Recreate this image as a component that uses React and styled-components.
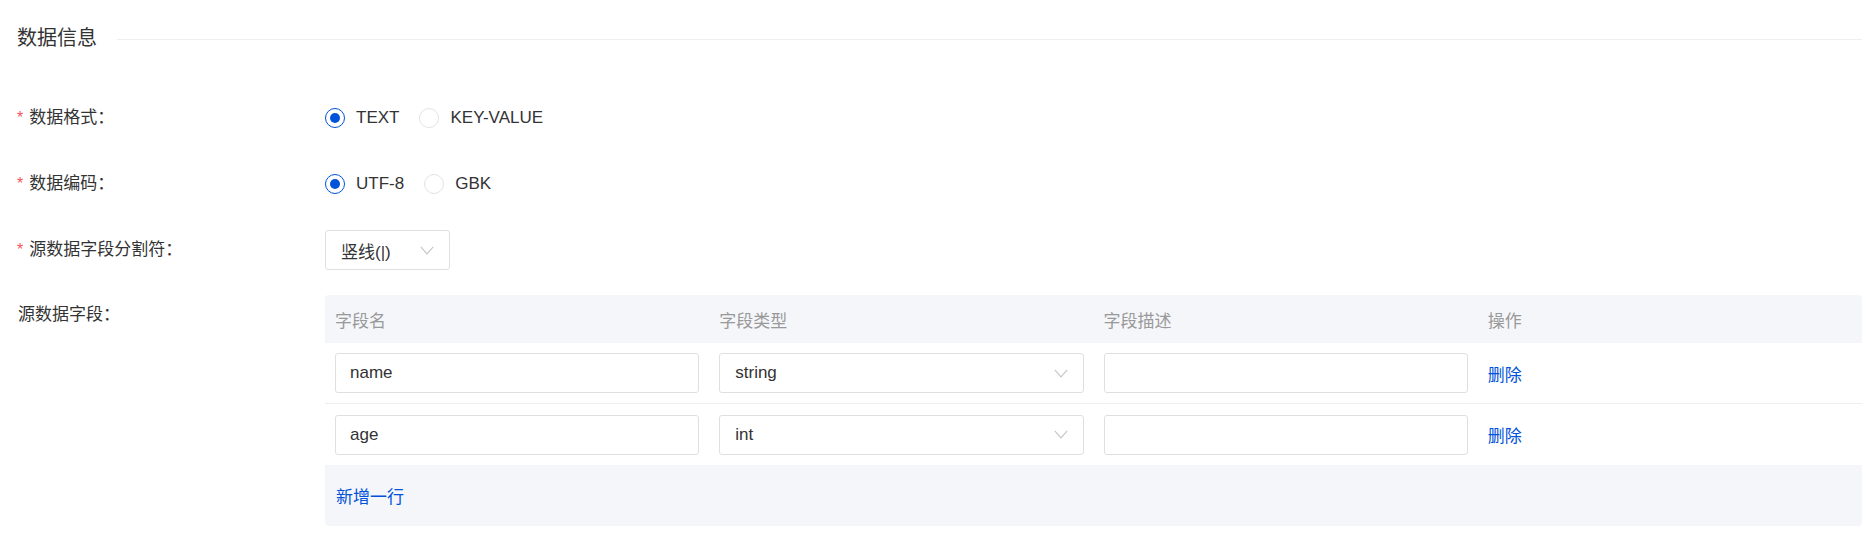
import React, { useState } from 'react';
import styled, { createGlobalStyle } from 'styled-components';

const GlobalStyle = createGlobalStyle`
  * {
    box-sizing: border-box;
  }

  body {
    margin: 0;
    background: #fff;
    font-family: 'Liberation Sans', 'Noto Sans CJK SC', sans-serif;
    color: #333;
  }
`;

const Page = styled.div`
  padding: 24px 8px 7px 17px;
`;

const SectionHeader = styled.div`
  display: flex;
  align-items: center;
  height: 28px;
  margin-bottom: 46px;

  h3 {
    margin: 0;
    font-size: 20px;
    font-weight: 400;
    line-height: 28px;
    color: #333;
    white-space: nowrap;
  }

  &::after {
    content: '';
    flex: 1;
    height: 1px;
    margin-left: 20px;
    margin-top: 2px;
    background: #eeeeee;
  }
`;

const FormItem = styled.div`
  display: flex;
  align-items: flex-start;
  margin-bottom: ${(p) => p.$gap ?? 26}px;
`;

const Label = styled.label`
  width: 308px;
  flex-shrink: 0;
  font-size: 17px;
  line-height: 40px;
  color: #333;
  padding-left: ${(p) => (p.$required ? 0 : 1)}px;

  &::before {
    content: ${(p) => (p.$required ? "'*'" : 'none')};
    color: #f5545c;
    margin-right: 6px;
    font-size: 16px;
  }
`;

const Control = styled.div`
  flex: 1;
  min-width: 0;
`;

const RadioGroup = styled.div`
  display: flex;
  align-items: center;
  height: 40px;
`;

const RadioOption = styled.label`
  display: inline-flex;
  align-items: center;
  margin-right: 10px;
  cursor: pointer;
  font-size: 17px;
  color: #333;

  span {
    padding: 0 10px 0 11px;
  }
`;

const RadioDot = styled.i`
  position: relative;
  width: 20px;
  height: 20px;
  border-radius: 50%;
  border: 1.5px solid ${(p) => (p.$checked ? '#0052d9' : '#e3e3e3')};
  background: #fff;

  &::after {
    content: '';
    position: absolute;
    left: 50%;
    top: 50%;
    width: 10px;
    height: 10px;
    margin: -5px 0 0 -5px;
    border-radius: 50%;
    background: #0052d9;
    opacity: ${(p) => (p.$checked ? 1 : 0)};
  }
`;

const SelectBox = styled.div`
  display: flex;
  align-items: center;
  justify-content: space-between;
  width: ${(p) => p.$width || '100%'};
  height: 40px;
  padding: 0 15px;
  border: 1px solid #dfdfdf;
  border-radius: 3px;
  background: #fff;
  font-size: 17px;
  color: #333;
`;

const Chevron = () => (
  <svg width="14" height="9" viewBox="0 0 14 9" fill="none">
    <path d="M0.8 0.8 L7 7.8 L13.2 0.8" stroke="#c6c6c6" strokeWidth="1.2" />
  </svg>
);

const Table = styled.div`
  width: 100%;
  border-radius: 4px;
  overflow: hidden;
`;

const TableRow = styled.div`
  display: grid;
  grid-template-columns: repeat(4, 1fr);
  align-items: center;
  height: ${(p) => (p.$head ? 48 : 61)}px;
  background: ${(p) => (p.$head ? '#f5f6fa' : '#fff')};
  border-bottom: ${(p) => (p.$divider ? '1px solid #eeeeee' : 'none')};
`;

const HeadCell = styled.div`
  padding: 0 10px;
  font-size: 17px;
  color: #999;
`;

const Cell = styled.div`
  padding: 0 10px;
`;

const TextInput = styled.input`
  width: 100%;
  height: 40px;
  padding: 0 14px;
  border: 1px solid #dfdfdf;
  border-radius: 3px;
  outline: none;
  font-family: inherit;
  font-size: 17px;
  color: #333;
  background: #fff;
`;

const LinkButton = styled.button`
  border: 0;
  padding: 0;
  background: none;
  cursor: pointer;
  font-family: inherit;
  font-size: 17px;
  color: #0052d9;
`;

const TableFooter = styled.div`
  display: flex;
  align-items: center;
  height: 61px;
  padding-left: 11px;
  background: #f5f6fa;
`;

const Radios = ({ options, value, onChange }) => (
  <RadioGroup>
    {options.map((opt) => (
      <RadioOption key={opt} onClick={() => onChange(opt)}>
        <RadioDot $checked={opt === value} />
        <span>{opt}</span>
      </RadioOption>
    ))}
  </RadioGroup>
);

const App = () => {
  const [format, setFormat] = useState('TEXT');
  const [encoding, setEncoding] = useState('UTF-8');
  const [fields, setFields] = useState([
    { name: 'name', type: 'string', desc: '' },
    { name: 'age', type: 'int', desc: '' },
  ]);

  const remove = (idx) => setFields(fields.filter((_, i) => i !== idx));
  const add = () => setFields([...fields, { name: '', type: 'string', desc: '' }]);

  return (
    <>
      <GlobalStyle />
      <Page>
        <SectionHeader>
          <h3>数据信息</h3>
        </SectionHeader>

        <FormItem>
          <Label $required>数据格式：</Label>
          <Control>
            <Radios options={['TEXT', 'KEY-VALUE']} value={format} onChange={setFormat} />
          </Control>
        </FormItem>

        <FormItem>
          <Label $required>数据编码：</Label>
          <Control>
            <Radios options={['UTF-8', 'GBK']} value={encoding} onChange={setEncoding} />
          </Control>
        </FormItem>

        <FormItem $gap={25}>
          <Label $required>源数据字段分割符：</Label>
          <Control>
            <SelectBox $width="125px">
              <span>竖线(|)</span>
              <Chevron />
            </SelectBox>
          </Control>
        </FormItem>

        <FormItem $gap={0}>
          <Label>源数据字段：</Label>
          <Control>
            <Table>
              <TableRow $head>
                <HeadCell>字段名</HeadCell>
                <HeadCell>字段类型</HeadCell>
                <HeadCell>字段描述</HeadCell>
                <HeadCell>操作</HeadCell>
              </TableRow>
              {fields.map((f, i) => (
                <TableRow key={i} $divider={i < fields.length - 1}>
                  <Cell>
                    <TextInput defaultValue={f.name} />
                  </Cell>
                  <Cell>
                    <SelectBox>
                      <span>{f.type}</span>
                      <Chevron />
                    </SelectBox>
                  </Cell>
                  <Cell>
                    <TextInput defaultValue={f.desc} />
                  </Cell>
                  <Cell>
                    <LinkButton onClick={() => remove(i)}>删除</LinkButton>
                  </Cell>
                </TableRow>
              ))}
              <TableFooter>
                <LinkButton onClick={add}>新增一行</LinkButton>
              </TableFooter>
            </Table>
          </Control>
        </FormItem>
      </Page>
    </>
  );
};

export default App;
